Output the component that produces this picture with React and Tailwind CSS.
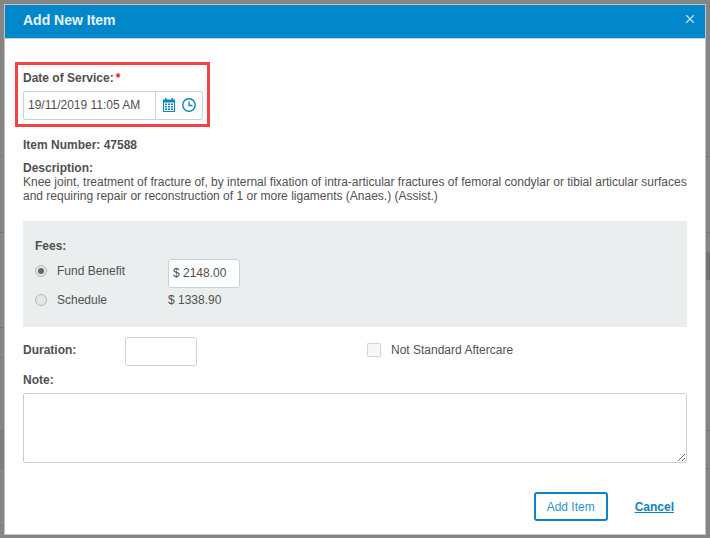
import React from 'react';
import { X } from 'lucide-react';

function CalendarIcon() {
  return (
    <svg width="12" height="14" viewBox="0 0 12 14" className="text-[#0a84c6] mb-[1px]">
      <path fill="currentColor" d="M0 1.5h2V0h1.5v1.5h5V0H10v1.5h2V14H0z" />
      <path fill="#fff" d="M1 4.5h10V13H1z" />
      <path fill="currentColor" d="M2 5.5h2V7H2zM5 5.5h2V7H5zM8 5.5h2V7H8zM2 8h2v1.5H2zM5 8h2v1.5H5zM8 8h2v1.5H8zM2 10.5h2V12H2zM5 10.5h2V12H5zM8 10.5h2V12H8z" />
    </svg>
  );
}

function ClockIcon() {
  return (
    <svg width="14" height="14" viewBox="0 0 14 14" fill="none" stroke="#0a84c6" className="ml-[7px] mb-[1px]">
      <circle cx="7" cy="7" r="6.2" strokeWidth="1.4" />
      <path d="M7 3.5V7.5H10.5" strokeWidth="1.3" />
    </svg>
  );
}

function Radio({ checked }) {
  return (
    <span className="mt-[6px] w-3 h-3 rounded-full border border-[#b5b5b5] bg-[#e6e6e6] flex items-center justify-center shrink-0">
      {checked && <span className="w-[6px] h-[6px] rounded-full bg-[#666]" />}
    </span>
  );
}

// page rows showing through the backdrop at the window's edges
function LeftEdge() {
  return (
    <div className="w-[4px] flex flex-col">
      <div className="h-[157px] border-b border-[#757575]" />
      <div className="h-[76px] border-b border-[#757575]" />
      <div className="h-[95px] border-b border-[#757575]" />
      <div className="h-[30px] border-b border-[#757575]" />
      <div className="h-[72px]" />
      <div className="h-[39px] bg-[#7e7e7e] border-y border-[#757575]" />
      <div className="h-[57px] border-b border-[#757575]" />
    </div>
  );
}

function RightEdge() {
  return (
    <div className="w-[4px] flex flex-col">
      <div className="h-[157px] border-b border-[#757575]" />
      <div className="h-[76px] border-b border-[#757575]" />
      <div className="h-[19px]" />
      <div className="h-[28px] bg-[#747474]" />
      <div className="h-[150px]" />
      <div className="h-[39px] border-y border-[#757575]" />
    </div>
  );
}

export default function App() {
  return (
    <div className="relative w-[710px] h-[538px] bg-[#858585] flex justify-between overflow-hidden font-['Liberation_Sans',Arial,sans-serif] text-[12px] text-[#505050]">
      <LeftEdge />
      <RightEdge />

      <div className="absolute top-[4px] left-[4px] w-[702px] h-[531px] border border-[#c4c4c4] bg-white flex flex-col">
        <div className="h-[34px] shrink-0 bg-[#0288ca] border-b border-[#c8d0d6] flex items-center justify-between pb-[3px] pl-[18px] pr-[8px]">
          <span className="text-[14px] font-bold text-[#e6f4fb]">Add New Item</span>
          <X size={14} strokeWidth={2} className="text-[#bfe4f6] mb-[2px]" />
        </div>

        <div className="flex-1 px-[18px] flex flex-col">
          <div className="mt-[23px] -ml-[8px] w-[195px] h-[65px] border-[3px] border-[#f44144] pl-[5px] pt-[6px]">
            <div className="font-bold leading-[14px] h-[14px]">
              Date of Service:<span className="text-[#e02020] ml-[2px]">*</span>
            </div>
            <div className="mt-[6px] w-[180px] h-[29px] border border-[#c5d3de] rounded-[2px] flex items-center">
              <span className="w-[132px] pl-[4px] text-[12px] leading-[27px] border-r border-[#c5d3de] h-full">19/11/2019 11:05 AM</span>
              <div className="flex items-center pl-[7px]">
                <CalendarIcon />
                <ClockIcon />
              </div>
            </div>
          </div>

          <div className="mt-[11px] font-bold leading-[14px]">Item Number: 47588</div>
          <div className="mt-[9px] font-bold leading-[14px]">Description:</div>
          <div className="leading-[14px] w-[664px]">
            Knee joint, treatment of fracture of, by internal fixation of intra-articular fractures of femoral condylar or tibial articular surfaces and requiring repair or reconstruction of 1 or more ligaments (Anaes.) (Assist.)
          </div>

          <div className="mt-[18px] h-[106px] bg-[#ebeeef] pl-[12px] pt-[18px]">
            <div className="font-bold leading-[14px]">Fees:</div>
            <div className="mt-[6px] h-[29px] flex items-start">
              <Radio checked />
              <span className="mt-[5px] ml-[10px] w-[111px] leading-[14px]">Fund Benefit</span>
              <div className="w-[72px] h-[29px] bg-white border border-[#c5d3de] rounded-[3px] pl-[4px] leading-[27px]">$ 2148.00</div>
            </div>
            <div className="h-[27px] flex items-start">
              <Radio />
              <span className="mt-[5px] ml-[10px] w-[111px] leading-[14px]">Schedule</span>
              <span className="mt-[5px] leading-[14px]">$ 1338.90</span>
            </div>
          </div>

          <div className="mt-[10px] h-[29px] flex items-start">
            <span className="mt-[6px] font-bold w-[102px] leading-[14px]">Duration:</span>
            <div className="w-[72px] h-[29px] border border-[#c5d3de] rounded-[3px]" />
            <span className="mt-[6px] ml-[170px] w-[14px] h-[14px] border border-[#ccd6de] bg-[#f7f7f7] rounded-[1px]" />
            <span className="mt-[6px] ml-[10px] leading-[14px]">Not Standard Aftercare</span>
          </div>

          <div className="mt-[7px] font-bold leading-[14px]">Note:</div>
          <textarea
            readOnly
            className="mt-[6px] w-[664px] h-[70px] block border border-[#c5d3de] rounded-[2px] outline-none"
          />

          <div className="mt-[29px] flex items-center justify-end pr-[13px]">
            <button className="w-[74px] h-[29px] border-2 border-[#0a84c6] rounded-[3px] text-[#2a97d4] text-[12px]">Add Item</button>
            <a className="ml-[27px] font-bold underline text-[#0a84c6]">Cancel</a>
          </div>
        </div>
      </div>
    </div>
  );
}
